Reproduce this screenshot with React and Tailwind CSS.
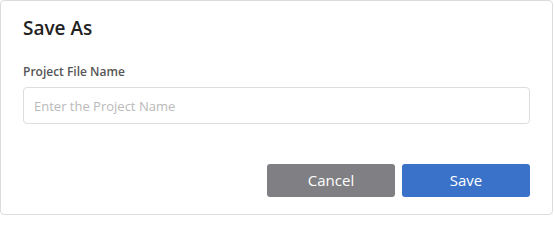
export default function App() {
  return (
    <div className="w-[554px] h-[216px] bg-white" style={{ fontFamily: '"Open Sans", "Noto Sans", sans-serif' }}>
      <div className="w-[553px] h-[215px] border border-[#dcdcdc] rounded-[4px] bg-white flex flex-col pl-[22px] pr-[22px] pt-[13px]">
        <h2 className="text-[19px] leading-[28px] font-semibold text-[#222222]">Save As</h2>
        <label className="mt-[22px] text-[12px] leading-[16px] font-semibold text-[#555555]">Project File Name</label>
        <input
          type="text"
          placeholder="Enter the Project Name"
          className="mt-[7px] h-[37px] w-full border border-[#dddddd] rounded-[4px] px-[10px] text-[13px] text-[#333] placeholder:text-[#b9b9b9] outline-none"
        />
        <div className="mt-[40px] flex justify-end gap-[7px]">
          <button className="w-[128px] h-[33px] rounded-[3px] bg-[#808084] text-white text-[15px]">Cancel</button>
          <button className="w-[128px] h-[33px] rounded-[3px] bg-[#3a72c9] text-white text-[15px]">Save</button>
        </div>
      </div>
    </div>
  );
}
